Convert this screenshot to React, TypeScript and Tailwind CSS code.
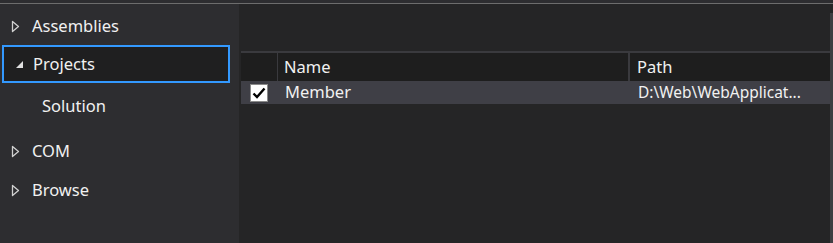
import React from 'react';

const font = { fontFamily: '"Noto Sans", "Open Sans", sans-serif' };

function Collapsed() {
  return (
    <svg width="9" height="13" viewBox="0 0 9 13" className="shrink-0">
      <path d="M1.5 1.5 L7.5 6.5 L1.5 11.5 Z" fill="none" stroke="#d0d0d0" strokeWidth="1.3" strokeLinejoin="round" />
    </svg>
  );
}

function Expanded() {
  return (
    <svg width="9" height="9" viewBox="0 0 9 9" className="shrink-0">
      <path d="M8 1 L8 8 L1 8 Z" fill="#e0e0e0" />
    </svg>
  );
}

function TreeItem({ label, open, selected, h }: { label: string; open?: boolean; selected?: boolean; h: string }) {
  return (
    <div
      className={`flex items-center pl-[11px] ${h} ${
        selected ? 'gap-[9px] border-2 border-[#3399ff] bg-[#1f1f20] pl-[9px] mr-[9px] ml-[2px]' : 'gap-[12px]'
      }`}
    >
      {open ? <span className="w-[9px] flex justify-center"><Expanded /></span> : <Collapsed />}
      <span className="text-[16.5px] text-[#f1f1f1]">{label}</span>
    </div>
  );
}

export default function App() {
  return (
    <div className="w-[833px] h-[243px] bg-[#2d2d30] flex flex-col overflow-hidden" style={font}>
      <div className="h-[3px] shrink-0" />
      <div className="h-px bg-[#6d6d6d] shrink-0" />
      <div className="flex flex-1 min-h-0">
        {/* left tree */}
        <div className="w-[239px] shrink-0 flex flex-col">
          <TreeItem label="Assemblies" h="h-[41px] pt-[3px]" />
          <TreeItem label="Projects" open selected h="h-[38px]" />
          <div className="h-[47px] flex items-center pl-[42px] text-[16.5px] text-[#f1f1f1]">Solution</div>
          <TreeItem label="COM" h="h-[42px]" />
          <TreeItem label="Browse" h="h-[37px]" />
        </div>

        {/* right list */}
        <div className="flex-1 bg-[#252526] flex">
          <div className="flex-1 flex flex-col pt-[47px] pl-[2px]">
            <div className="flex h-[30px] bg-[#1e1e1e] border-t-2 border-[#3a3a3e] text-[16.5px] text-[#f1f1f1]">
              <div className="w-[37px] border-r border-[#3a3a3e]" />
              <div className="w-[352px] border-r-2 border-[#3a3a3e] flex items-center pl-[6px]">Name</div>
              <div className="flex-1 flex items-center pl-[7px]">Path</div>
            </div>
            <div className="flex h-[23px] bg-[#3f3f46] text-[16.5px] text-[#f1f1f1] items-center">
              <div className="w-[37px] flex items-center pl-[9px]">
                <div className="w-[18px] h-[18px] bg-white border border-[#8a8a8a] flex items-center justify-center">
                  <svg width="14" height="12" viewBox="0 0 14 12">
                    <path d="M1.5 6.5 L5 10 L12.5 1.5" fill="none" stroke="#000" strokeWidth="2.4" />
                  </svg>
                </div>
              </div>
              <div className="w-[352px] pl-[7px] leading-none">Member</div>
              <div className="flex-1 pl-[8px] leading-none whitespace-nowrap text-[15.5px]">D:\Web\WebApplicat...</div>
            </div>
          </div>
          <div className="w-[3px] mt-[9px] bg-[#3e3e42]" />
        </div>
      </div>
    </div>
  );
}
